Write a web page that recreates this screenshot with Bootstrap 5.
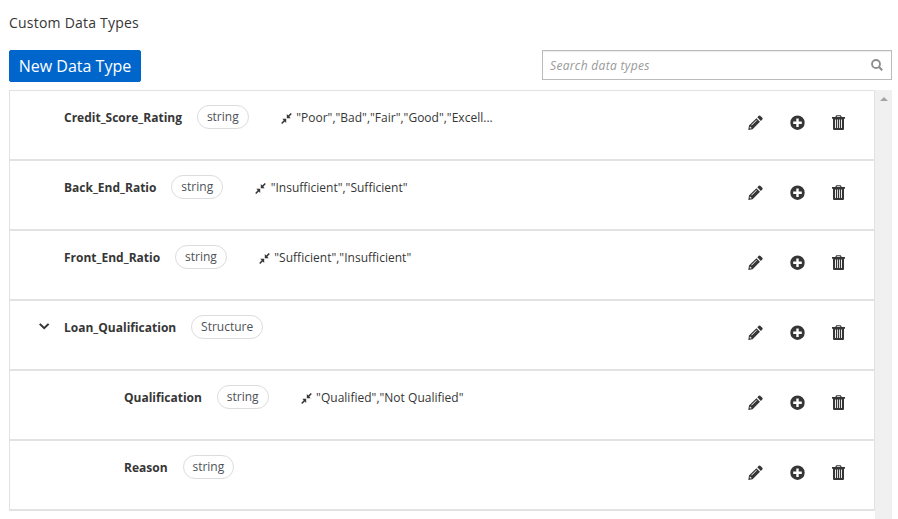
<!DOCTYPE html>
<html lang="en">
<head>
<meta charset="utf-8">
<meta name="viewport" content="width=device-width, initial-scale=1">
<title>Custom Data Types</title>
<link href="https://cdn.jsdelivr.net/npm/bootstrap@5.3.0/dist/css/bootstrap.min.css" rel="stylesheet">
<style>
body{font-family:"Open Sans",sans-serif;font-size:12px;line-height:20px;color:#363636;height:519px}
.page{padding:13px 6px 0 9px}
.page-title{font-size:14px;line-height:20px;font-weight:500;letter-spacing:.22px}
.toolbar{height:32px;margin-top:17px}
.btn-new{--bs-btn-bg:#06c;--bs-btn-border-color:#06c;--bs-btn-hover-bg:#004080;font-size:16px;line-height:30px;height:32px;width:132px;border-radius:2px}
.search{width:350px;height:30px;border:1px solid #bbb;box-shadow:inset 0 1px 1px rgba(3,3,3,.075);padding:0 8px 0 7px}
.search .form-control{font-size:12px;font-style:italic;line-height:20px;letter-spacing:.33px;padding-top:1px!important}
.search .form-control::placeholder{color:#999}
.lens{fill:none;stroke:#8b8d8f}
.viewport{margin-top:8px;height:429px}
.type-row{height:70px;border:1px solid #e2e2e2;padding:14px 29px 0 29px}
.list-end{border-top:1px solid #e2e2e2}
.toggle{width:25px;height:22px}
.type-row.nested .toggle{width:85px}
.type-name{font-weight:700;line-height:24px;padding-top:1px}
.type-tag{height:24px;border:1px solid #dcdcdc;line-height:21px;padding:0 8.9px;margin-left:15px;color:#4d5258}
.constraint{line-height:24px;margin-left:32px;padding-top:1px;gap:4.6px;letter-spacing:.015px}
.actions{gap:27px;padding-top:10px}
.actions svg{display:block}
.track{width:17px;background:#f0f0f0;padding-top:7px}
.track svg{fill:#a3a3a3}
svg{fill:currentColor;flex:none}
</style>
</head>
<body class="bg-white overflow-hidden">
<svg class="d-none">
  <symbol id="pencil" viewBox="0 0 15 15"><path fill-rule="evenodd" d="M.3 14.9 1 10.6 8.4 3.2l3.6 3.6L4.6 14.2ZM9.3 2.3 10.8.8Q11.7.2 12.5.9l1.8 1.8q.8.8 0 1.7l-1.5 1.5ZM1.9 11.7l-.3 1.2.7.7 1.2-.3v-.8h-.8v-.8ZM3.2 10l.5.5L8.8 5.4l-.5-.5Z"/></symbol>
  <symbol id="plus" viewBox="0 0 15 15"><path fill-rule="evenodd" d="M7.5.5a7.2 7.2 0 1 0 0 14.4 7.2 7.2 0 0 0 0-14.4ZM6.3 3.4h2.4v3.1h3.1v2.4H8.7v3.1H6.3V8.9H3.2V6.5h3.1Z"/></symbol>
  <symbol id="trash" viewBox="0 0 13 15"><path fill-rule="evenodd" d="M3.4 2C3.5.7 4.2.2 5 .2h3c.8 0 1.5.5 1.6 1.8H13v1.8h-1V14q0 1-1 1H2q-1 0-1-1V3.8H0V2ZM4.6 2h3.8c-.1-.6-.3-.8-.7-.8H5.3c-.4 0-.6.2-.7.8ZM3 4.6V13h.9V4.6ZM5 4.6V13h.8V4.6ZM7.2 4.6V13h.8V4.6ZM9.1 4.6V13h.9V4.6Z"/></symbol>
  <symbol id="compress" viewBox="0 0 11 11"><path d="M5.2 5.8v4.1L3.8 8.5 1.2 10.9l-1-1 2.5-2.6-1.4-1.5ZM5.8 5.2V1.1l1.4 1.4L9.8.1l1 1-2.5 2.6 1.4 1.5Z"/></symbol>
</svg>
<main class="page">
  <h1 class="page-title mb-0">Custom Data Types</h1>
  <div class="toolbar d-flex justify-content-between">
    <button class="btn btn-primary btn-new p-0" type="button">New Data Type</button>
    <div class="search d-flex align-items-center">
      <input class="form-control border-0 p-0 shadow-none bg-transparent" type="text" placeholder="Search data types" aria-label="Search data types">
      <svg class="lens" width="12" height="12" viewBox="0 0 12 12"><circle cx="5" cy="5" r="4" stroke-width="1.8"/><path d="m8 8 3.2 3.2" stroke-width="2.1"/></svg>
    </div>
  </div>
  <div class="viewport d-flex overflow-hidden">
    <div class="flex-grow-1">
      <div class="type-row d-flex align-items-start">
        <span class="toggle"></span><span class="type-name">Credit_Score_Rating</span><span class="type-tag rounded-pill">string</span>
        <span class="constraint d-flex align-items-center"><svg width="11" height="11"><use href="#compress"/></svg>"Poor","Bad","Fair","Good","Excell...</span>
        <div class="actions d-flex ms-auto"><svg width="15" height="15"><use href="#pencil"/></svg><svg width="15" height="15"><use href="#plus"/></svg><svg width="13" height="15"><use href="#trash"/></svg></div>
      </div>
      <div class="type-row d-flex align-items-start">
        <span class="toggle"></span><span class="type-name">Back_End_Ratio</span><span class="type-tag rounded-pill">string</span>
        <span class="constraint d-flex align-items-center"><svg width="11" height="11"><use href="#compress"/></svg>"Insufficient","Sufficient"</span>
        <div class="actions d-flex ms-auto"><svg width="15" height="15"><use href="#pencil"/></svg><svg width="15" height="15"><use href="#plus"/></svg><svg width="13" height="15"><use href="#trash"/></svg></div>
      </div>
      <div class="type-row d-flex align-items-start">
        <span class="toggle"></span><span class="type-name">Front_End_Ratio</span><span class="type-tag rounded-pill">string</span>
        <span class="constraint d-flex align-items-center"><svg width="11" height="11"><use href="#compress"/></svg>"Sufficient","Insufficient"</span>
        <div class="actions d-flex ms-auto"><svg width="15" height="15"><use href="#pencil"/></svg><svg width="15" height="15"><use href="#plus"/></svg><svg width="13" height="15"><use href="#trash"/></svg></div>
      </div>
      <div class="type-row d-flex align-items-start">
        <span class="toggle d-flex align-items-center"><svg width="11" height="7" viewBox="0 0 11 7"><path d="M1.5.2 5.2 3.8 8.9.2 10.4 1.6 5.2 6.6 0 1.6Z"/></svg></span><span class="type-name">Loan_Qualification</span><span class="type-tag rounded-pill">Structure</span>
        <div class="actions d-flex ms-auto"><svg width="15" height="15"><use href="#pencil"/></svg><svg width="15" height="15"><use href="#plus"/></svg><svg width="13" height="15"><use href="#trash"/></svg></div>
      </div>
      <div class="type-row nested d-flex align-items-start">
        <span class="toggle"></span><span class="type-name">Qualification</span><span class="type-tag rounded-pill">string</span>
        <span class="constraint d-flex align-items-center"><svg width="11" height="11"><use href="#compress"/></svg>"Qualified","Not Qualified"</span>
        <div class="actions d-flex ms-auto"><svg width="15" height="15"><use href="#pencil"/></svg><svg width="15" height="15"><use href="#plus"/></svg><svg width="13" height="15"><use href="#trash"/></svg></div>
      </div>
      <div class="type-row nested d-flex align-items-start">
        <span class="toggle"></span><span class="type-name">Reason</span><span class="type-tag rounded-pill">string</span>
        <div class="actions d-flex ms-auto"><svg width="15" height="15"><use href="#pencil"/></svg><svg width="15" height="15"><use href="#plus"/></svg><svg width="13" height="15"><use href="#trash"/></svg></div>
      </div>
      <div class="list-end"></div>
    </div>
    <div class="track d-flex justify-content-center align-items-start"><svg width="8" height="4" viewBox="0 0 8 4"><path d="M4 0 8 4H0Z"/></svg></div>
  </div>
</main>
<script src="https://cdn.jsdelivr.net/npm/bootstrap@5.3.0/dist/js/bootstrap.bundle.min.js"></script>
</body>
</html>
